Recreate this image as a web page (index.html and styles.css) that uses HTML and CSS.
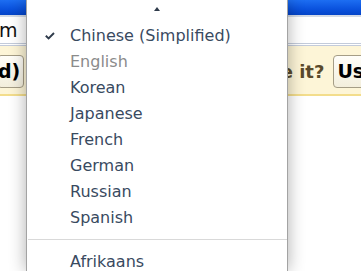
FILE: index.html
```html
<!DOCTYPE html>
<html>
<head>
    <link rel="stylesheet" href="styles.css">
</head>
<body>
    <div class="titlebar"></div>
    <div class="addressbar"><span class="address">m</span></div>
    <div class="infobar">
        <button class="bar-button first">d)</button>
        <div class="question">Would you like to use it?</div>
        <button class="bar-button last">Use</button>
    </div>
    <div class="page"></div>

    <div class="menu">
        <div class="scroll-up">
            <svg width="6" height="4" viewBox="0 0 6 4"><path d="M3 0L6 4H0Z" fill="#2f3b4b"/></svg>
        </div>
        <ul class="lang-list">
            <li class="lang selected">
                <span class="check">
                    <svg width="10" height="8" viewBox="0 0 10 8"><path d="M0.8 3.8L3.6 6.5L9 1" fill="none" stroke="#2f3b4b" stroke-width="1.9"/></svg>
                </span>
                Chinese (Simplified)
            </li>
            <li class="lang disabled"><span class="check"></span>English</li>
            <li class="lang"><span class="check"></span>Korean</li>
            <li class="lang"><span class="check"></span>Japanese</li>
            <li class="lang"><span class="check"></span>French</li>
            <li class="lang"><span class="check"></span>German</li>
            <li class="lang"><span class="check"></span>Russian</li>
            <li class="lang"><span class="check"></span>Spanish</li>
        </ul>
        <div class="separator"></div>
        <ul class="lang-list">
            <li class="lang"><span class="check"></span>Afrikaans</li>
        </ul>
    </div>
</body>
</html>
```

FILE: styles.css
```css
:root {
    --menu-text: #394a5f;
    --menu-muted: #8b8b8b;
    --bar-yellow: #fdf5d7;
}
body {
    margin: 0;
    width: 361px;
    height: 271px;
    overflow: hidden;
    position: relative;
    background: white;
    font-family: "DejaVu Sans", Verdana, sans-serif;
}
.titlebar {
    height: 15px;
    background: linear-gradient(#1d6ef2, #0a52de 60%, #0444c8);
}
.addressbar {
    height: 26px;
    background: white;
    border-top: 2px solid #d3dae6;
    border-bottom: 3px double #c3cbda;
    display: flex;
    align-items: center;
    overflow: hidden;
}
.address {
    font-size: 19px;
    color: #111;
    margin-left: -1px;
}
.infobar {
    width: 384px;
    height: 48px;
    background: var(--bar-yellow);
    border-bottom: 2px solid #f3dd8c;
    display: flex;
    align-items: center;
    gap: 9px;
}
.bar-button {
    height: 33px;
    flex-shrink: 0;
    border: 1px solid #a59d86;
    border-radius: 4px;
    background: linear-gradient(#fffef9, #f3eedc);
    font-family: "DejaVu Sans", Verdana, sans-serif;
    font-weight: bold;
    font-size: 19px;
    color: #000;
    padding: 0 6px;
    margin-top: 2px;
}
.bar-button.first {
    margin-left: -3px;
    padding-left: 0;
    padding-right: 3px;
}
.bar-button.last {
    padding-left: 3px;
}
.question {
    flex: 1;
    min-width: 0;
    display: flex;
    justify-content: flex-end;
    font-weight: bold;
    font-size: 18px;
    color: #5a4a2b;
    white-space: nowrap;
    margin-top: 2px;
}
.menu {
    position: absolute;
    top: 0;
    bottom: 0;
    left: 26px;
    width: 260px;
    background: white;
    border-left: 1px solid #a3a3a3;
    border-right: 1px solid #a3a3a3;
    box-shadow: 0 0 16px rgba(0,0,0,0.32);
}
.scroll-up {
    height: 23px;
    display: flex;
    justify-content: center;
    align-items: flex-start;
    padding-top: 7px;
    box-sizing: border-box;
}
.scroll-up svg {
    display: block;
}
.lang-list {
    list-style: none;
    margin: 0;
    padding: 0;
}
.lang {
    display: flex;
    align-items: center;
    height: 25.9px;
    padding-left: 18px;
    font-size: 16px;
    color: var(--menu-text);
    white-space: nowrap;
}
.lang.disabled {
    color: var(--menu-muted);
}
.check {
    width: 25px;
    flex-shrink: 0;
    display: flex;
    align-items: center;
}
.check svg {
    display: block;
}
.separator {
    height: 1px;
    background: #d9d9d9;
    margin: 9px 0 8px 1px;
}
```
